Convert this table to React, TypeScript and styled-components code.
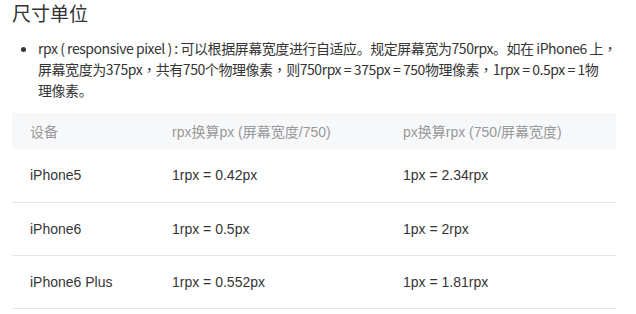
import React from "react";
import styled, { createGlobalStyle } from "styled-components";

const Global = createGlobalStyle`
  html, body { margin: 0; padding: 0; background: #fff; }
  body { font-family: "Liberation Sans", "Noto Sans CJK SC", sans-serif; color: #333; }
`;

const Page = styled.div`
  padding: 0 20px 0 12px;
  width: 604px;
`;

const Title = styled.h2`
  margin: 0;
  font-family: "Noto Sans CJK SC", sans-serif;
  font-size: 19px;
  line-height: 26px;
  font-weight: 400;
  color: #333;
`;

const List = styled.ul`
  margin: 12px 0 0;
  padding: 0 0 0 26px;
  font-family: "Noto Sans CJK SC", sans-serif;
  font-size: 14px;
  line-height: 21px;
  letter-spacing: -0.45px;
  color: #353535;
`;

const Item = styled.li`
  margin: 0;
  white-space: nowrap;
`;

const Comma = styled.span`
  font-family: "Noto Sans CJK TC", sans-serif;
`;

const Table = styled.table`
  margin-top: 12px;
  width: 604px;
  border-collapse: collapse;
  font-size: 14px;
  table-layout: fixed;
`;

const Head = styled.th<{ $w: number }>`
  width: ${(p) => p.$w}px;
  height: 36px;
  padding: 0 0 0 18px;
  background: #f7f8fa;
  color: #999;
  font-weight: 400;
  text-align: left;
  box-sizing: border-box;
`;

const Row = styled.tr`
  border-bottom: 1px solid #e5e5e5;
`;

const Cell = styled.td`
  height: 53px;
  padding: 0 0 0 18px;
  color: #353535;
  box-sizing: border-box;
`;

const rows = [
  ["iPhone5", "1rpx = 0.42px", "1px = 2.34rpx"],
  ["iPhone6", "1rpx = 0.5px", "1px = 2rpx"],
  ["iPhone6 Plus", "1rpx = 0.552px", "1px = 1.81rpx"],
];

export default function App() {
  return (
    <Page>
      <Global />
      <Title>尺寸单位</Title>
      <List>
        <Item>
          rpx ( responsive pixel ) : 可以根据屏幕宽度进行自适应。规定屏幕宽为750rpx。如在 iPhone6 上<Comma>，</Comma>
          <br />
          屏幕宽度为375px<Comma>，</Comma>共有750个物理像素<Comma>，</Comma>则750rpx = 375px = 750物理像素<Comma>，</Comma>1rpx = 0.5px = 1物
          <br />
          理像素。
        </Item>
      </List>
      <Table>
        <thead>
          <tr>
            <Head $w={142}>设备</Head>
            <Head $w={231}>rpx换算px (屏幕宽度/750)</Head>
            <Head $w={231}>px换算rpx (750/屏幕宽度)</Head>
          </tr>
        </thead>
        <tbody>
          {rows.map((r) => (
            <Row key={r[0]}>
              {r.map((c) => (
                <Cell key={c}>{c}</Cell>
              ))}
            </Row>
          ))}
        </tbody>
      </Table>
    </Page>
  );
}
